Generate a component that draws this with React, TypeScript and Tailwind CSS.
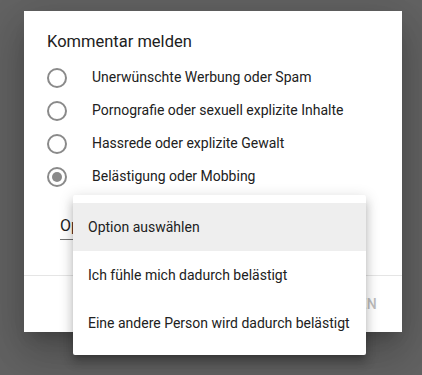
import { useState } from "react";

const reasons = [
  "Unerwünschte Werbung oder Spam",
  "Pornografie oder sexuell explizite Inhalte",
  "Hassrede oder explizite Gewalt",
  "Belästigung oder Mobbing",
];

const menuOptions = [
  "Option auswählen",
  "Ich fühle mich dadurch belästigt",
  "Eine andere Person wird dadurch belästigt",
];

function Radio({ checked }: { checked: boolean }) {
  return (
    <span className="flex h-5 w-5 items-center justify-center rounded-full border-2 border-[#8a8a8a]">
      {checked && <span className="h-[10px] w-[10px] rounded-full bg-[#8a8a8a]" />}
    </span>
  );
}

export default function App() {
  const [selected] = useState(3);

  return (
    <div
      className="relative h-[375px] w-[422px] overflow-hidden bg-[#636363] pt-[11px] pl-[24px]"
      style={{ fontFamily: "Roboto, 'Noto Sans', sans-serif" }}
    >
      <div className="flex h-[321px] w-[378px] flex-col bg-white shadow-[0_11px_15px_-7px_rgba(0,0,0,0.2),0_24px_38px_3px_rgba(0,0,0,0.14),0_9px_46px_8px_rgba(0,0,0,0.12)]">
        <div className="px-[23px] pt-[20px]">
          <h2 className="text-[16.5px] leading-[22px] text-[#212121]">Kommentar melden</h2>
          <div className="mt-[8px] flex flex-col">
            {reasons.map((reason, i) => (
              <div key={reason} className="flex h-[33px] items-center">
                <Radio checked={i === selected} />
                <span className="ml-[25px] text-[14px] text-[#212121]">{reason}</span>
              </div>
            ))}
          </div>
          {/* select trigger, mostly covered by the open menu */}
          <div className="mt-[23px] ml-[13px] w-[280px] border-b border-[#757575] pb-[3px] text-[16px] leading-[20px] text-[#212121]">
            Option auswählen
          </div>
        </div>
        <div className="mt-auto border-t border-[#e5e5e5]">
          <div className="flex h-[56px] items-center justify-end gap-2 pr-[25px]">
            <span className="text-[14px] font-medium tracking-wide text-[#bdbdbd]">ABBRECHEN</span>
            <span className="text-[14px] font-medium tracking-wide text-[#bdbdbd]">MELDEN</span>
          </div>
        </div>
      </div>

      <div className="absolute top-[195px] left-[73px] w-[293px] rounded-[2px] bg-white py-[8px] shadow-[0_5px_5px_-3px_rgba(0,0,0,0.2),0_8px_10px_1px_rgba(0,0,0,0.14),0_3px_14px_2px_rgba(0,0,0,0.12)]">
        {menuOptions.map((opt, i) => (
          <div
            key={opt}
            className={`flex h-[48px] items-center px-[15px] text-[14px] text-[#212121] ${i === 0 ? "bg-[#eeeeee]" : ""}`}
          >
            {opt}
          </div>
        ))}
      </div>
    </div>
  );
}
